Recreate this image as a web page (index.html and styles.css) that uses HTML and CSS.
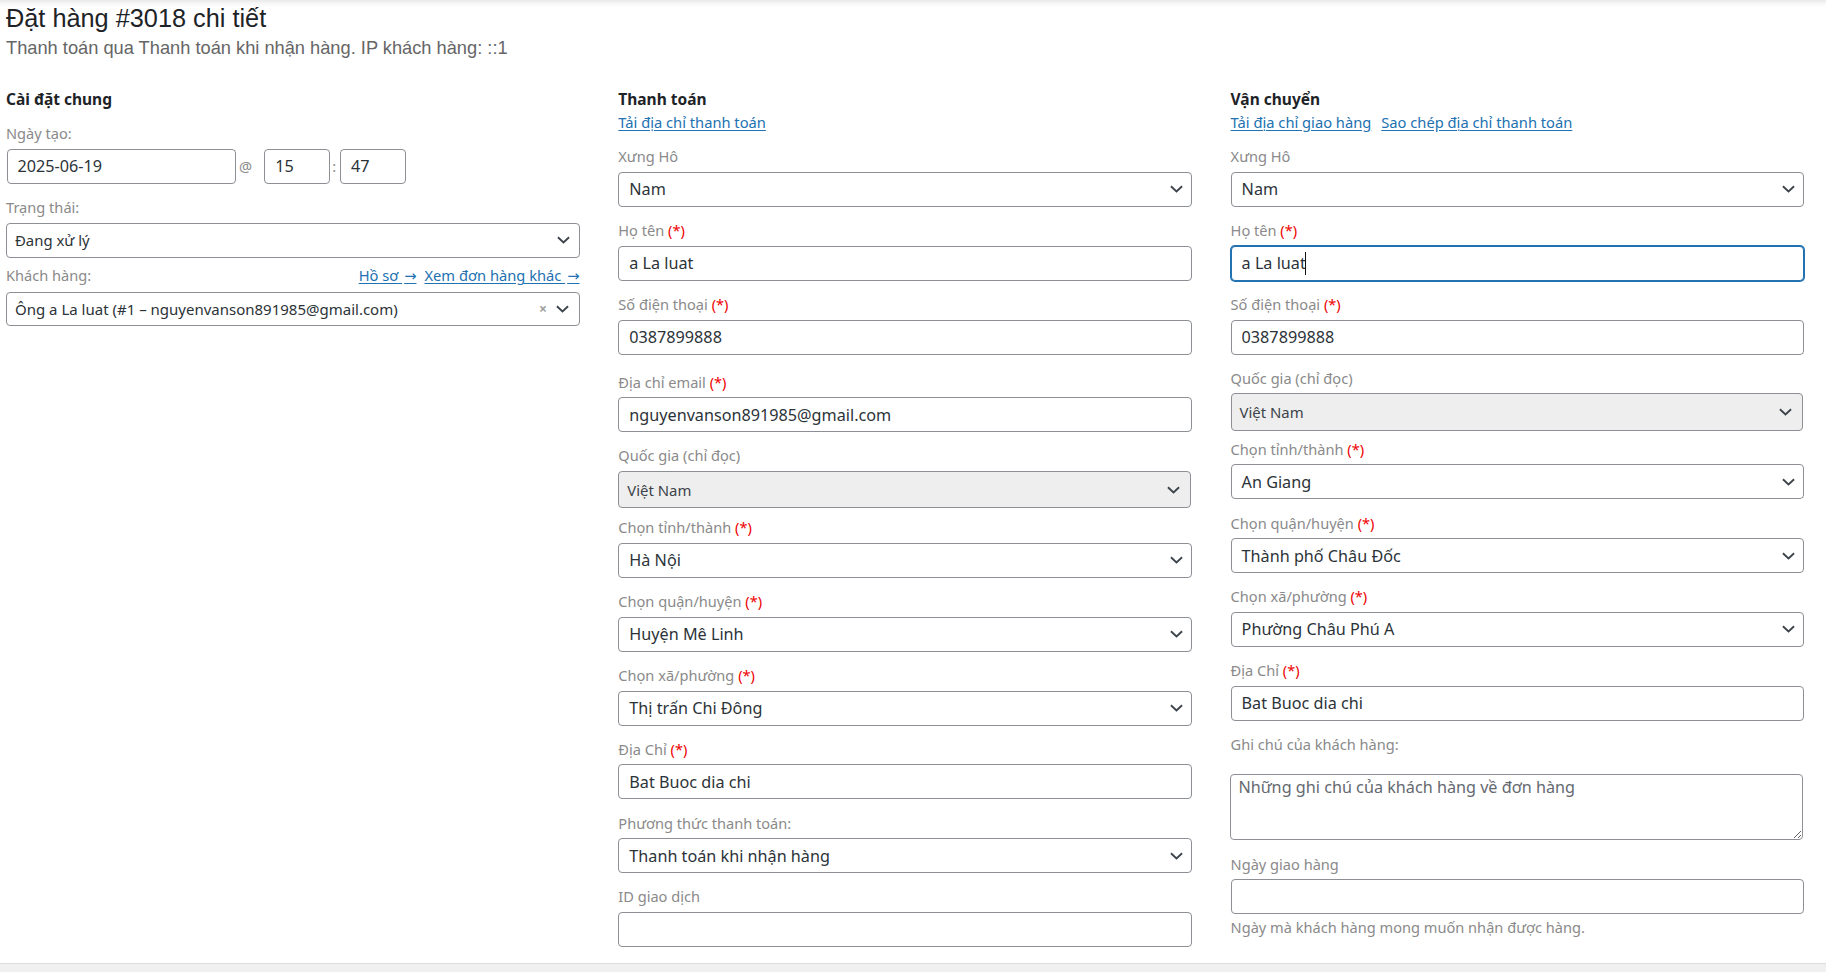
FILE: index.html
```html
<!DOCTYPE html>
<html lang="vi">
<head>
<meta charset="utf-8">
<title>Đặt hàng #3018 chi tiết</title>
<link rel="stylesheet" href="styles.css">
</head>
<body>
<div class="panel">
  <h2 class="order-title">Đặt hàng #3018 chi tiết</h2>
  <p class="order-meta">Thanh toán qua Thanh toán khi nhận hàng. IP khách hàng: ::1</p>

  <div class="columns">
    <!-- General -->
    <section class="col">
      <h3 class="col-title">Cài đặt chung</h3>

      <div class="field gen-date">
        <label class="label">Ngày tạo:</label>
        <div class="date-row">
          <input class="input date" type="text" value="2025-06-19">
          <span class="at">@</span>
          <input class="input hour" type="text" value="15">
          <span class="colon">:</span>
          <input class="input minute" type="text" value="47">
        </div>
      </div>

      <div class="field gen-status">
        <label class="label">Trạng thái:</label>
        <div class="select select-s2w">
          <span>Đang xử lý</span>
          <svg class="chev" viewBox="0 0 14 8" width="13" height="8"><path d="M1 1l6 5.6L13 1" fill="none" stroke="#3c434a" stroke-width="2"/></svg>
        </div>
      </div>

      <div class="field gen-customer">
        <div class="label-row">
          <label class="label">Khách hàng:</label>
          <div class="links">
            <a class="link" href="#">Hồ sơ <span class="arr">→</span></a>
            <a class="link" href="#">Xem đơn hàng khác <span class="arr">→</span></a>
          </div>
        </div>
        <div class="select select-cust">
          <span>Ông a La luat (#1 – nguyenvanson891985@gmail.com)</span>
          <span class="sel-tools"><span class="clear">×</span><svg class="chev" viewBox="0 0 14 8" width="13" height="8"><path d="M1 1l6 5.6L13 1" fill="none" stroke="#3c434a" stroke-width="2"/></svg></span>
        </div>
      </div>
    </section>

    <!-- Billing -->
    <section class="col">
      <h3 class="col-title">Thanh toán</h3>
      <div class="col-links"><a class="link" href="#">Tải địa chỉ thanh toán</a></div>

      <div class="field first">
        <label class="label">Xưng Hô</label>
        <div class="select"><span>Nam</span><svg class="chev" viewBox="0 0 14 8" width="13" height="8"><path d="M1 1l6 5.6L13 1" fill="none" stroke="#3c434a" stroke-width="2"/></svg></div>
      </div>
      <div class="field">
        <label class="label">Họ tên <span class="req">(*)</span></label>
        <input class="input" type="text" value="a La luat">
      </div>
      <div class="field">
        <label class="label">Số điện thoại <span class="req">(*)</span></label>
        <input class="input" type="text" value="0387899888">
      </div>
      <div class="field email">
        <label class="label">Địa chỉ email <span class="req">(*)</span></label>
        <input class="input" type="text" value="nguyenvanson891985@gmail.com">
      </div>
      <div class="field field-s2">
        <label class="label">Quốc gia (chỉ đọc)</label>
        <div class="select select-ro"><span>Việt Nam</span><svg class="chev" viewBox="0 0 14 8" width="13" height="8"><path d="M1 1l6 5.6L13 1" fill="none" stroke="#3c434a" stroke-width="2"/></svg></div>
      </div>
      <div class="field">
        <label class="label">Chọn tỉnh/thành <span class="req">(*)</span></label>
        <div class="select"><span>Hà Nội</span><svg class="chev" viewBox="0 0 14 8" width="13" height="8"><path d="M1 1l6 5.6L13 1" fill="none" stroke="#3c434a" stroke-width="2"/></svg></div>
      </div>
      <div class="field">
        <label class="label">Chọn quận/huyện <span class="req">(*)</span></label>
        <div class="select"><span>Huyện Mê Linh</span><svg class="chev" viewBox="0 0 14 8" width="13" height="8"><path d="M1 1l6 5.6L13 1" fill="none" stroke="#3c434a" stroke-width="2"/></svg></div>
      </div>
      <div class="field">
        <label class="label">Chọn xã/phường <span class="req">(*)</span></label>
        <div class="select"><span>Thị trấn Chi Đông</span><svg class="chev" viewBox="0 0 14 8" width="13" height="8"><path d="M1 1l6 5.6L13 1" fill="none" stroke="#3c434a" stroke-width="2"/></svg></div>
      </div>
      <div class="field">
        <label class="label">Địa Chỉ <span class="req">(*)</span></label>
        <input class="input" type="text" value="Bat Buoc dia chi">
      </div>
      <div class="field">
        <label class="label">Phương thức thanh toán:</label>
        <div class="select"><span>Thanh toán khi nhận hàng</span><svg class="chev" viewBox="0 0 14 8" width="13" height="8"><path d="M1 1l6 5.6L13 1" fill="none" stroke="#3c434a" stroke-width="2"/></svg></div>
      </div>
      <div class="field">
        <label class="label">ID giao dịch</label>
        <input class="input" type="text" value="">
      </div>
    </section>

    <!-- Shipping -->
    <section class="col">
      <h3 class="col-title">Vận chuyển</h3>
      <div class="col-links">
        <a class="link" href="#">Tải địa chỉ giao hàng</a>
        <a class="link" href="#">Sao chép địa chỉ thanh toán</a>
      </div>

      <div class="field first">
        <label class="label">Xưng Hô</label>
        <div class="select"><span>Nam</span><svg class="chev" viewBox="0 0 14 8" width="13" height="8"><path d="M1 1l6 5.6L13 1" fill="none" stroke="#3c434a" stroke-width="2"/></svg></div>
      </div>
      <div class="field">
        <label class="label">Họ tên <span class="req">(*)</span></label>
        <div class="input is-focus"><span>a La luat</span><span class="caret"></span></div>
      </div>
      <div class="field">
        <label class="label">Số điện thoại <span class="req">(*)</span></label>
        <input class="input" type="text" value="0387899888">
      </div>
      <div class="field field-s2 tight">
        <label class="label">Quốc gia (chỉ đọc)</label>
        <div class="select select-ro"><span>Việt Nam</span><svg class="chev" viewBox="0 0 14 8" width="13" height="8"><path d="M1 1l6 5.6L13 1" fill="none" stroke="#3c434a" stroke-width="2"/></svg></div>
      </div>
      <div class="field">
        <label class="label">Chọn tỉnh/thành <span class="req">(*)</span></label>
        <div class="select"><span>An Giang</span><svg class="chev" viewBox="0 0 14 8" width="13" height="8"><path d="M1 1l6 5.6L13 1" fill="none" stroke="#3c434a" stroke-width="2"/></svg></div>
      </div>
      <div class="field">
        <label class="label">Chọn quận/huyện <span class="req">(*)</span></label>
        <div class="select"><span>Thành phố Châu Đốc</span><svg class="chev" viewBox="0 0 14 8" width="13" height="8"><path d="M1 1l6 5.6L13 1" fill="none" stroke="#3c434a" stroke-width="2"/></svg></div>
      </div>
      <div class="field">
        <label class="label">Chọn xã/phường <span class="req">(*)</span></label>
        <div class="select"><span>Phường Châu Phú A</span><svg class="chev" viewBox="0 0 14 8" width="13" height="8"><path d="M1 1l6 5.6L13 1" fill="none" stroke="#3c434a" stroke-width="2"/></svg></div>
      </div>
      <div class="field">
        <label class="label">Địa Chỉ <span class="req">(*)</span></label>
        <input class="input" type="text" value="Bat Buoc dia chi">
      </div>
      <div class="field field-note">
        <label class="label">Ghi chú của khách hàng:</label>
        <textarea class="textarea" placeholder="Những ghi chú của khách hàng về đơn hàng"></textarea>
      </div>
      <div class="field">
        <label class="label">Ngày giao hàng</label>
        <input class="input" type="text" value="">
        <p class="desc">Ngày mà khách hàng mong muốn nhận được hàng.</p>
      </div>
    </section>
  </div>
</div>
</body>
</html>
```
FILE: styles.css
```css
html, body {
  margin: 0;
  padding: 0;
}
body {
  background: #f0f0f1;
  font-family: "Noto Sans", "DejaVu Sans", sans-serif;
  color: #2c3338;
  height: 972px;
  overflow: hidden;
}

.panel {
  background: linear-gradient(to bottom, #e8e8e8 0, #f6f6f6 3px, #ffffff 7px);
  border-bottom: 1px solid #dcdcde;
  padding: 3px 0 16px 6px;
}

.order-title {
  margin: 0;
  font-family: "Liberation Sans", Arial, sans-serif;
  font-weight: 400;
  font-size: 25.3px;
  line-height: 30px;
  color: #1d2327;
}
.order-meta {
  margin: 2.8px 0 0;
  font-family: "Liberation Sans", Arial, sans-serif;
  font-size: 18.25px;
  line-height: 24px;
  color: #666666;
}

.columns {
  display: grid;
  grid-template-columns: repeat(3, 573.5px);
  column-gap: 38.8px;
  margin-top: 28.7px;
  align-items: start;
}

.col-title {
  margin: 0;
  font-size: 15.5px;
  line-height: 22px;
  font-weight: 700;
  color: #1d2327;
}

.col-links {
  margin-top: 1.5px;
  display: flex;
  gap: 10px;
  font-size: 14.7px;
  line-height: 20px;
}

.link {
  color: #2271b1;
  text-decoration: underline;
  text-underline-offset: 2px;
}
.arr {
  margin-left: 2px;
}

.field {
  margin-bottom: 13.3px;
}
.field:last-child {
  margin-bottom: 0;
}
.field.first {
  margin-top: 14.5px;
}
.field.email {
  padding-top: 3.8px;
}

.label {
  display: block;
  font-size: 14.6px;
  line-height: 20px;
  color: #8a8a8a;
  margin-bottom: 5.5px;
}
.req {
  color: #ee0000;
}

.input {
  display: block;
  width: 100%;
  box-sizing: border-box;
  height: 35px;
  margin: 0;
  padding: 0 10px;
  border: 1px solid #8c8f94;
  border-radius: 4px;
  background: #fff;
  font-family: "Noto Sans", sans-serif;
  font-size: 16.2px;
  color: #2c3338;
  outline: none;
}
.input.is-focus {
  display: flex;
  align-items: center;
  border-color: #2271b1;
  box-shadow: 0 0 0 1px #2271b1;
}
.caret {
  display: inline-block;
  width: 1.5px;
  height: 23px;
  background: #111;
  margin-left: -1px;
}

.select {
  display: flex;
  align-items: center;
  justify-content: space-between;
  box-sizing: border-box;
  height: 35px;
  padding: 0 8px 0 10px;
  border: 1px solid #8c8f94;
  border-radius: 4px;
  background: #fff;
  font-size: 16.2px;
  color: #2c3338;
  white-space: nowrap;
}
.chev {
  display: block;
  flex: none;
}

.select-ro {
  height: 37.5px;
  padding: 0 10px 0 8px;
  background: #eeeeee;
  font-size: 14.9px;
  color: #3c434a;
  margin-right: 1px;
}
.field-s2 {
  margin-bottom: 9px;
}
.field-s2.tight {
  margin-bottom: 8px;
}

/* General column */
.gen-date {
  margin-top: 12.3px;
  margin-bottom: 13px;
}
.gen-date .label,
.gen-status .label {
  margin-bottom: 6px;
}
.date-row {
  display: flex;
  align-items: baseline;
}
.date-row .date {
  width: 229.5px;
  margin-left: 0.5px;
}
.date-row .hour,
.date-row .minute {
  width: 66px;
}
.at {
  margin: 0 12px 0 3px;
  font-size: 14.6px;
  color: #8a8a8a;
}
.colon {
  margin: 0 4px 0 2px;
  font-size: 14.6px;
  color: #8a8a8a;
}
.gen-status {
  margin-bottom: 7.7px;
}
.select-s2w {
  font-size: 14.9px;
  padding: 0 9px 0 8px;
  height: 35px;
}
.label-row {
  display: flex;
  justify-content: space-between;
  align-items: baseline;
  margin-bottom: 6.5px;
}
.label-row .label {
  margin-bottom: 0;
}
.links {
  display: flex;
  gap: 8px;
  font-size: 14.7px;
  line-height: 20px;
}
.select-cust {
  height: 34.5px;
  padding: 0 9.5px 0 8px;
  font-size: 15px;
  color: #2c3338;
}
.sel-tools {
  display: flex;
  align-items: center;
  gap: 9px;
}
.clear {
  font-size: 14px;
  font-weight: 700;
  color: #a0a0a0;
  line-height: 1;
}

/* Shipping extras */
.field-note .label {
  margin-bottom: 20.4px;
}
.field-note {
  margin-bottom: 13.5px;
}
.textarea {
  display: block;
  width: 100%;
  box-sizing: border-box;
  height: 66px;
  margin: 0 0 0 -0.7px;
  padding: 0 7.5px;
  border: 1px solid #8c8f94;
  border-radius: 4px;
  font-family: "Noto Sans", sans-serif;
  font-size: 16.2px;
  line-height: 24.3px;
  color: #2c3338;
  outline: none;
}
.textarea::placeholder {
  color: #646970;
  opacity: 1;
}
.desc {
  margin: 3px 0 0;
  font-size: 14.6px;
  line-height: 20px;
  color: #8a8a8a;
}
```
